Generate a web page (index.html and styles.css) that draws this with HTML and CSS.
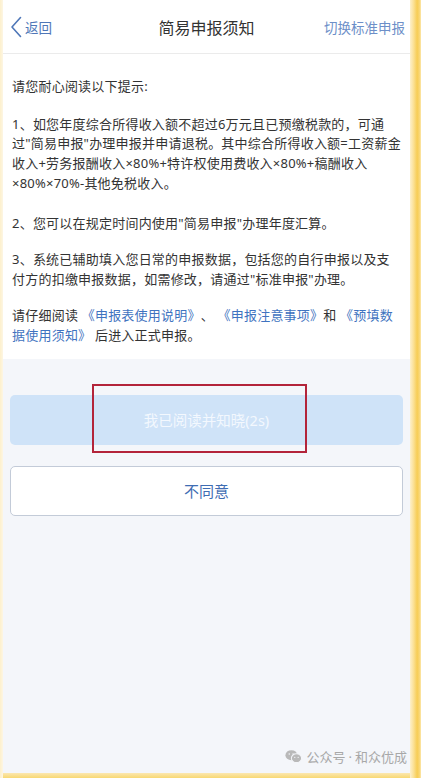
FILE: index.html
```html
<!DOCTYPE html>
<html lang="zh-CN">
<head>
<meta charset="utf-8">
<title>简易申报须知</title>
<link rel="stylesheet" href="styles.css">
</head>
<body>
<div class="frame">
  <div class="left-edge"></div>
  <div class="column">
    <div class="screen">
      <header class="nav">
        <a class="nav-back">
          <svg class="chev" width="12" height="22" viewBox="0 0 12 22"><path d="M10.5 1.5 L2 11 L10.5 20.5" fill="none" stroke="#4f77b8" stroke-width="1.6" stroke-linecap="round" stroke-linejoin="round"/></svg>
          <span>返回</span>
        </a>
        <h1 class="nav-title">简易申报须知</h1>
        <a class="nav-switch">切换标准申报</a>
      </header>

      <section class="notice">
        <p class="lead">请您耐心阅读以下提示:</p>
        <p class="first">1、如您年度综合所得收入额不超过6万元且已预缴税款的，可通过"简易申报"办理申报并申请退税。其中综合所得收入额=工资薪金收入+劳务报酬收入×80%+特许权使用费收入×80%+稿酬收入×80%×70%-其他免税收入。</p>
        <p>2、您可以在规定时间内使用"简易申报"办理年度汇算。</p>
        <p>3、系统已辅助填入您日常的申报数据，包括您的自行申报以及支付方的扣缴申报数据，如需修改，请通过"标准申报"办理。</p>
        <p>请仔细阅读 <a class="doc">《申报表使用说明》</a>、 <a class="doc">《申报注意事项》</a>和 <a class="doc">《预填数据使用须知》</a> 后进入正式申报。</p>
      </section>

      <section class="actions">
        <div class="btn-wrap">
          <div class="btn btn-confirm">我已阅读并知晓(2s)</div>
          <span class="highlight"></span>
        </div>
        <div class="btn btn-decline">不同意</div>
      </section>

      <footer class="mark">
        <svg width="17" height="15" viewBox="0 0 20 17"><ellipse cx="7.5" cy="7" rx="7" ry="6" fill="#b9b9b9"/><ellipse cx="13.5" cy="10.5" rx="6" ry="5.2" fill="#b9b9b9" stroke="#f4f6fa" stroke-width="1.2"/><circle cx="5" cy="5.5" r="0.9" fill="#f4f6fa"/><circle cx="9.5" cy="5.5" r="0.9" fill="#f4f6fa"/><circle cx="11.5" cy="9.5" r="0.8" fill="#f4f6fa"/><circle cx="15.5" cy="9.5" r="0.8" fill="#f4f6fa"/></svg>
        <span>公众号<span class="dot">·</span>和众优成</span>
      </footer>
    </div>
    <div class="bottom-edge"></div>
  </div>
  <div class="right-edge"></div>
</div>
</body>
</html>
```

FILE: styles.css
```css
* { box-sizing: border-box; }

html, body {
  margin: 0;
  padding: 0;
}

body {
  width: 421px;
  height: 778px;
  overflow: hidden;
  font-family: "Noto Sans", "Noto Sans CJK SC", sans-serif;
  color: #333;
}

/* yellow photo frame around the phone screen */
.frame {
  width: 421px;
  height: 778px;
  display: flex;
}

.left-edge {
  width: 3px;
  background: linear-gradient(90deg, #fdf0cc, #fdf6e4);
}

.right-edge {
  width: 11px;
  background: linear-gradient(90deg, #fdf0cc 0, #fbe29a 30%, #f7cd55 65%, #f9d672 85%, #fce7ad 100%);
}

.column {
  width: 407px;
  display: flex;
  flex-direction: column;
}

.bottom-edge {
  height: 5px;
  background: linear-gradient(180deg, #fbe7b0, #f8d873);
}

.screen {
  flex: 1;
  background: #f4f6fa;
  display: flex;
  flex-direction: column;
}

/* top navigation bar */
.nav {
  height: 54px;
  flex: none;
  background: #fff;
  border-bottom: 1px solid #ebebeb;
  display: flex;
  align-items: center;
  justify-content: space-between;
  padding: 0 5px 0 7px;
  position: relative;
}

.nav-back {
  display: flex;
  align-items: center;
  gap: 3px;
  color: #4f77b8;
  font-size: 13.5px;
}

.nav-title {
  position: absolute;
  left: 0;
  right: 0;
  text-align: center;
  margin: 0;
  font-size: 16px;
  font-weight: 400;
  color: #333;
  pointer-events: none;
}

.nav-switch {
  color: #6d8fc8;
  font-size: 13.5px;
}

/* notice body */
.notice {
  background: #fff;
  padding: 23px 8px 13px 9px;
  font-size: 13px;
  line-height: 19.7px;
  letter-spacing: 0.22px;
  color: #333;
  text-spacing-trim: space-all;
}

.notice p {
  margin: 0 0 16.5px;
}

.notice p:last-child {
  margin-bottom: 0;
}

.notice .lead {
  margin-bottom: 18px;
}

.notice .first {
  margin-bottom: 20.5px;
}

.doc {
  color: #3f73c0;
}

/* action buttons */
.actions {
  padding: 36px 7px 0 7px;
  display: flex;
  flex-direction: column;
  gap: 21px;
}

.btn-wrap {
  position: relative;
}

.btn {
  width: 100%;
  height: 50px;
  border-radius: 5px;
  font-size: 14.5px;
  display: flex;
  align-items: center;
  justify-content: center;
}

.btn-confirm {
  background: #cfe3f8;
  color: #f3f8fe;
}

.btn-decline {
  background: #fff;
  border: 1px solid #c3cbd8;
  color: #3f6db3;
  font-size: 15px;
}

.highlight {
  position: absolute;
  left: 82px;
  top: -11px;
  width: 215px;
  height: 69px;
  border: 2px solid #b3243a;
}

/* watermark */
.mark {
  margin-top: auto;
  margin-bottom: 7px;
  align-self: flex-end;
  margin-right: 3px;
  display: flex;
  align-items: center;
  gap: 4px;
  color: #a8a8a8;
  font-size: 13px;
  font-family: "Noto Sans CJK SC", sans-serif;
}

.mark .dot {
  font-family: "Noto Sans", sans-serif;
  margin: 0 3px;
}
```
